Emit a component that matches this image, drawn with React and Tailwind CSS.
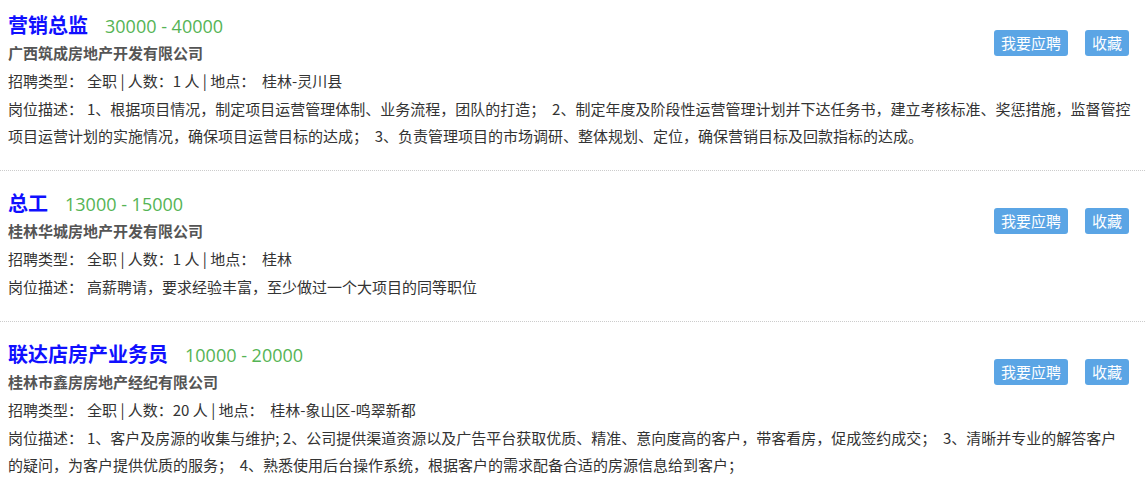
import React from "react";

const jobs = [
  {
    title: "营销总监",
    salary: "30000 - 40000",
    company: "广西筑成房地产开发有限公司",
    info: "全职 | 人数：1 人 | 地点：  桂林-灵川县",
    desc: [
      "1、根据项目情况，制定项目运营管理体制、业务流程，团队的打造；  2、制定年度及阶段性运营管理计划并下达任务书，建立考核标准、奖惩措施，监督管控",
      "项目运营计划的实施情况，确保项目运营目标的达成；  3、负责管理项目的市场调研、整体规划、定位，确保营销目标及回款指标的达成。",
    ],
  },
  {
    title: "总工",
    salary: "13000 - 15000",
    company: "桂林华城房地产开发有限公司",
    info: "全职 | 人数：1 人 | 地点：  桂林",
    desc: ["高薪聘请，要求经验丰富，至少做过一个大项目的同等职位"],
  },
  {
    title: "联达店房产业务员",
    salary: "10000 - 20000",
    company: "桂林市鑫房房地产经纪有限公司",
    info: "全职 | 人数：20 人 | 地点：  桂林-象山区-鸣翠新都",
    desc: [
      "1、客户及房源的收集与维护; 2、公司提供渠道资源以及广告平台获取优质、精准、意向度高的客户，带客看房，促成签约成交；  3、清晰并专业的解答客户",
      "的疑问，为客户提供优质的服务；  4、熟悉使用后台操作系统，根据客户的需求配备合适的房源信息给到客户；",
    ],
  },
];

function Job({ job, first }) {
  return (
    <div
      className={
        first
          ? "pl-2 pr-2 pt-[11px] pb-[21px]"
          : "border-t border-dotted border-[#cccccc] pl-2 pr-2 pt-[18px] pb-[21px]"
      }
    >
      <div className="float-right mt-[19px] mr-[8px] flex gap-[17px]">
        <button className="h-[26px] px-[7px] rounded-[3px] bg-[#5ba5e5] text-white text-[15px] leading-[26px]">
          我要应聘
        </button>
        <button className="h-[26px] px-[7px] rounded-[3px] bg-[#5ba5e5] text-white text-[15px] leading-[26px]">
          收藏
        </button>
      </div>
      <div className="flex items-baseline h-[28px] leading-[28px]">
        <span className="text-[20px] font-bold text-[#1010ff]">{job.title}</span>
        <span className="ml-[17px] text-[18px] text-[#55b455] font-['Open_Sans','Noto_Sans_CJK_SC',sans-serif]">
          {job.salary}
        </span>
      </div>
      <div className="text-[15px] leading-[28px] font-bold text-[#555555]">{job.company}</div>
      <div className="text-[15px] leading-[28px] text-[#333333] whitespace-pre">
        招聘类型：<span className="ml-[4px]">{job.info}</span>
      </div>
      <div className="text-[15px] leading-[27px] text-[#333333] whitespace-pre">
        岗位描述：<span className="ml-[4px]">{job.desc[0]}</span>
        {job.desc.slice(1).map((l, i) => (
          <React.Fragment key={i}>
            <br />
            {l}
          </React.Fragment>
        ))}
      </div>
    </div>
  );
}

export default function App() {
  return (
    <div className="w-[1145px] min-h-[492px] bg-white font-['Noto_Sans_CJK_SC','Noto_Sans',sans-serif]">
      {jobs.map((job, i) => (
        <Job key={i} job={job} first={i === 0} />
      ))}
    </div>
  );
}
